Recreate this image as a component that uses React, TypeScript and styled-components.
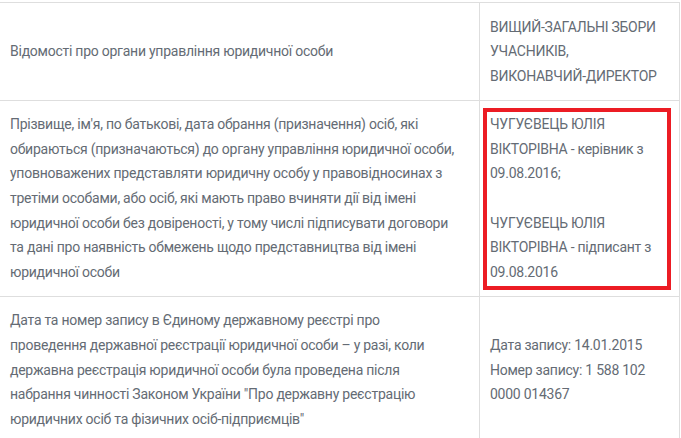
import React from 'react'
import styled, { createGlobalStyle } from 'styled-components'

const GlobalStyle = createGlobalStyle`
  html, body {
    margin: 0;
    padding: 0;
    background: #fff;
  }
  body {
    font-family: Roboto, "Noto Sans", sans-serif;
  }
`

const Page = styled.div`
  padding-top: 2px;
  height: 436px;
  overflow: hidden;
`

const Table = styled.table`
  border-collapse: collapse;
  width: 681px;
  margin-left: -1px;
  font-size: 14px;
  letter-spacing: -0.25px;
  line-height: 24.6px;
  color: #646b74;
`

const Row = styled.tr`
  border-top: 1px solid #dedede;
`

const LabelCell = styled.td`
  width: 459px;
  padding: 11.5px 10px;
  border-left: 1px solid #dedede;
  vertical-align: middle;
  white-space: nowrap;
`

const ValueCell = styled.td<{ $marked?: boolean }>`
  position: relative;
  padding: 11.5px 10px;
  border-left: 1px solid #dedede;
  border-right: 1px solid #dedede;
  vertical-align: ${(p) => (p.$marked ? 'top' : 'middle')};
  white-space: nowrap;
`

const Mark = styled.div`
  position: absolute;
  left: 3px;
  right: 8px;
  top: 7px;
  bottom: 6px;
  border: 4px solid #ec1c24;
  pointer-events: none;
`

const Gap = styled.div`
  height: 24.6px;
`

const rows = [
  {
    label: ['Відомості про органи управління юридичної особи'],
    value: [['ВИЩИЙ-ЗАГАЛЬНІ ЗБОРИ', 'УЧАСНИКІВ,', 'ВИКОНАВЧИЙ-ДИРЕКТОР']],
  },
  {
    label: [
      'Прізвище, ім\'я, по батькові, дата обрання (призначення) осіб, які',
      'обираються (призначаються) до органу управління юридичної особи,',
      'уповноважених представляти юридичну особу у правовідносинах з',
      'третіми особами, або осіб, які мають право вчиняти дії від імені',
      'юридичної особи без довіреності, у тому числі підписувати договори',
      'та дані про наявність обмежень щодо представництва від імені',
      'юридичної особи',
    ],
    value: [
      ['ЧУГУЄВЕЦЬ ЮЛІЯ', 'ВІКТОРІВНА - керівник з', '09.08.2016;'],
      ['ЧУГУЄВЕЦЬ ЮЛІЯ', 'ВІКТОРІВНА - підписант з', '09.08.2016'],
    ],
    marked: true,
  },
  {
    label: [
      'Дата та номер запису в Єдиному державному реєстрі про',
      'проведення державної реєстрації юридичної особи – у разі, коли',
      'державна реєстрація юридичної особи була проведена після',
      'набрання чинності Законом України "Про державну реєстрацію',
      'юридичних осіб та фізичних осіб-підприємців"',
    ],
    value: [['Дата запису: 14.01.2015', 'Номер запису: 1 588 102', '0000 014367']],
  },
]

const Lines: React.FC<{ lines: string[] }> = ({ lines }) => (
  <>
    {lines.map((l, i) => (
      <React.Fragment key={i}>
        {i > 0 && <br />}
        {l}
      </React.Fragment>
    ))}
  </>
)

export default function App() {
  return (
    <Page>
      <GlobalStyle />
      <Table>
        <tbody>
          {rows.map((r, i) => (
            <Row key={i}>
              <LabelCell>
                <Lines lines={r.label} />
              </LabelCell>
              <ValueCell $marked={r.marked}>
                {r.marked && <Mark />}
                {r.value.map((block, j) => (
                  <React.Fragment key={j}>
                    {j > 0 && <Gap />}
                    <div>
                      <Lines lines={block} />
                    </div>
                  </React.Fragment>
                ))}
              </ValueCell>
            </Row>
          ))}
        </tbody>
      </Table>
    </Page>
  )
}
